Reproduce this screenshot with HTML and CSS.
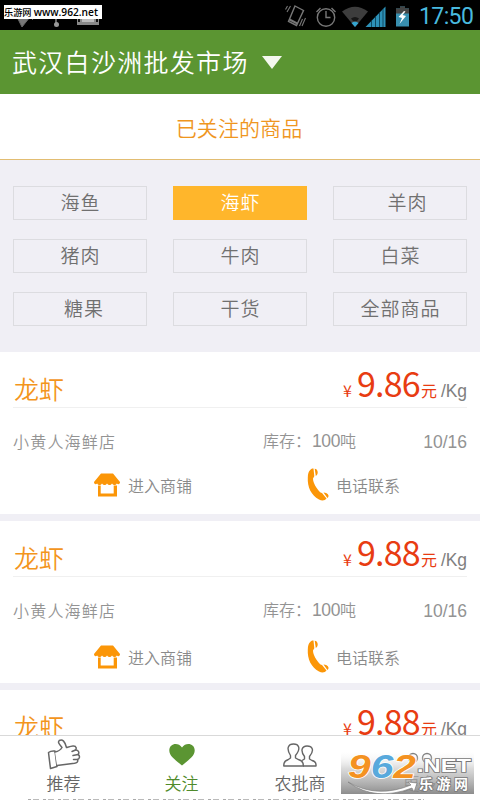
FILE: index.html
```html
<!DOCTYPE html>
<html lang="zh-CN">
<head>
<meta charset="utf-8">
<title>已关注的商品</title>
<link rel="stylesheet" href="styles.css">
</head>
<body>
<svg class="defs" width="0" height="0" aria-hidden="true">
  <symbol id="shop" viewBox="0 0 26 24">
    <path d="M7 .5h12L26 9C26 11 24.500 12 22.800 10.500 21.500 12.500 19.500 12.500 18 10.500 16.500 12.500 14.500 12.500 13 10.500 11.500 12.500 9.500 12.500 8 10.500 6.500 12.500 4.500 12.500 3.200 10.500 1.500 12 0 11 0 9z"/>
    <path d="M4 12.500h2.700v8h13v-8h3.300v11H4z"/>
  </symbol>
  <symbol id="phone" viewBox="0 0 22 33">
    <path d="M3.200 2C4.500.700 5.500.300 6.500.500L7.300 8.300 6 10.500C6 15 9.500 20.500 13.500 24.500L15 24.900 19.500 30.500C18 32.600 15 33 12 31.500C4 27 .300 19 .800 9.500C.900 6 1.500 3.500 3.200 2z"/>
    <path d="M7.700.7c1.800 0 3 1.600 3 3.600 0 1.600-.6 3-1.900 3.800zM16.500 24.600c1.700-.1 4.700 1.200 5 2.800.1 1-.3 1.900-1.100 2.500z"/>
  </symbol>
</svg>
<div class="screen">
  <div class="status">
    <svg class="notif" width="110" height="30" viewBox="0 0 110 30">
      <path d="M17 17l5 10 8-10zM30 17l3 3" fill="#777" stroke="#666"/>
      <path d="M56 17v7" stroke="#888" stroke-width="1.500"/><circle cx="56.500" cy="24.500" r="2.500" fill="#999"/>
      <path d="M77 17h22v8H77z" fill="#888"/><path d="M82 17h12v5H82z" fill="#bbb"/><path d="M79 19v3M97 19v3" stroke="#111" stroke-width="2"/>
    </svg>
    <div class="site">乐游网 <span>www.962.net</span></div>
    <svg class="sys" width="134" height="30" viewBox="0 0 134 30">
      <g fill="none" stroke="#777" stroke-width="1.400">
        <path d="M10 6l8.500 4.500-7 15L3.500 21.500z"/><path d="M4.500 19.500l8 4.200" stroke-width="2"/>
        <path d="M5.500 6L2 12M2.500 6L.5 9.500M20.500 18L17 26M17.500 19l-3 7" stroke-width="1.100"/>
        <circle cx="41" cy="17.500" r="8.700"/><path d="M41 11v6.500h4.500M31.500 12l4-4M50.500 12l-4-4"/>
      </g>
      <path d="M57 11.500Q70 2 83 11.500L70 27z" fill="#3d3d3d"/>
      <path d="M66 18.500Q70 15.500 74 18.500L72 21h-4z" fill="#171717"/><path d="M66.500 23Q70 20.500 73.500 23L70 27z" fill="#35a5d0"/>
      <path d="M80.500 27L100.500 6.500V27z" fill="#2d91b8"/><path d="M86.500 20.500V27M90.500 16.500V27M94.500 12.500V27M98 9V27" stroke="#08394b" stroke-width=".8"/>
      <path d="M115 6.500h5v2h4v18h-13V8.500h4z" fill="#388faf"/><path d="M115 6.500h5v2h4v5h-13v-5h4z" fill="#444"/>
      <path d="M119 11l-5.500 6 3.500 1-2.500 6 6.500-8-3.500-1 3-3.500z" fill="#fff"/>
    </svg>
    <div class="clock">17:50</div>
  </div>
  <header class="market"><span>武汉白沙洲批发市场</span><i></i></header>
  <h1 class="title">已关注的商品</h1>
  <nav class="chips">
    <a>海鱼</a><a class="on">海虾</a><a class="right">羊肉</a>
    <a>猪肉</a><a>牛肉</a><a>白菜</a>
    <a class="shift">糖果</a><a>干货</a><a>全部商品</a>
  </nav>
  <main class="list">
    <section class="card">
      <div class="head"><h2>龙虾</h2><p class="price"><small>¥</small><b>9.86</b><em>元</em><span>/Kg</span></p></div>
      <div class="info"><span class="store">小黄人海鲜店</span><span class="stock">库存：<i>100</i>吨</span><span class="date">10/16</span></div>
      <div class="acts"><a class="enter"><svg width="26" height="24"><use href="#shop"/></svg>进入商铺</a><a class="call"><svg width="22" height="33"><use href="#phone"/></svg>电话联系</a></div>
    </section>
    <section class="card second">
      <div class="head"><h2>龙虾</h2><p class="price"><small>¥</small><b>9.88</b><em>元</em><span>/Kg</span></p></div>
      <div class="info"><span class="store">小黄人海鲜店</span><span class="stock">库存：<i>100</i>吨</span><span class="date">10/16</span></div>
      <div class="acts"><a class="enter"><svg width="26" height="24"><use href="#shop"/></svg>进入商铺</a><a class="call"><svg width="22" height="33"><use href="#phone"/></svg>电话联系</a></div>
    </section>
    <section class="card third">
      <div class="head"><h2>龙虾</h2><p class="price"><small>¥</small><b>9.88</b><em>元</em><span>/Kg</span></p></div>
    </section>
  </main>
  <footer class="tabs">
    <a class="t1"><svg width="34" height="32" viewBox="0 0 34 32" fill="#fff" stroke="#666" stroke-width="1.500" stroke-linejoin="round" stroke-linecap="round">
      <path d="M1.500 13.500Q4 11.500 8 12L10 27.500 3.500 29.500Q2.500 22 1.500 13.500z"/>
      <path d="M8 13Q13 12 15 8.500C12 5 10.500 3 12.300 1.500C15.500-.2 18 2.500 19.500 8.500C23 7.500 28.500 5.500 29 8.500Q29.500 10.500 28.500 11C32 11 32.500 14 31 15.500C33.500 17 32.500 20 30.500 20.500C31.500 23 29.500 24 27.500 24.300L10 26.500"/>
      <path d="M25 12.500l3.500-1.500M26 16.500l5-1M26.500 20.500l4 0" fill="none"/></svg><span>推荐</span></a>
    <a class="t2"><svg width="26" height="22" viewBox="0 0 26 22"><path d="M13 21.500C6 15.500.3 12 .3 6.500.3-.5 9-2.200 13 3.500 17-2.200 25.700-.5 25.700 6.500 25.700 12 20 15.500 13 21.500z" fill="#5b9532"/></svg><span>关注</span></a>
    <a class="t3"><svg width="34" height="24" viewBox="0 0 34 24" fill="#fff" stroke="#666" stroke-width="1.400" stroke-linejoin="round">
      <path d="M20 23h13Q33.500 18.500 29 17.500L26.500 16V13.500C32 7 29 3 24 3S17 7.500 21.500 13.500V16L19 17.500"/>
      <path d="M.8 23h19.500Q20.500 18 16 16.800L12.500 15V12.500C18.500 5 15.500 1 10.500 1S2.800 5 7.500 12.500V15L5 16.800Q.5 18 .8 23z"/></svg><span>农批商</span></a>
    <a class="t4"><svg width="26" height="16" viewBox="0 0 26 16" fill="none" stroke="#666" stroke-width="1.400"><circle cx="6" cy="11" r="4.500"/><circle cx="20" cy="11" r="4.500"/></svg><span>更多</span></a>
    <div class="under"></div>
  </footer>
  <div class="mark">
    <svg width="133" height="43" viewBox="0 0 133 43">
      <defs><linearGradient id="haze" x2="0" y2="1"><stop offset="0" stop-color="#fff" stop-opacity=".1"/><stop offset=".4" stop-color="#ccc" stop-opacity=".7"/><stop offset="1" stop-color="#808080" stop-opacity=".9"/></linearGradient></defs>
      <path d="M0 0h133v43H0z" fill="url(#haze)"/>
      <g font-family="Liberation Sans" font-weight="700" font-style="italic" font-size="33" stroke="#fff" stroke-width="1.500" paint-order="stroke">
        <text x="7" y="27" textLength="68" lengthAdjust="spacingAndGlyphs"><tspan fill="#f49221">9</tspan><tspan fill="#58a9dc">6</tspan><tspan fill="#f49221">2</tspan></text>
      </g>
      <path d="M7 31Q36 48 70 34L67 31 76 32 73 41 71 37Q34 51 7 31z" fill="#fff" stroke="#777" stroke-width=".6"/>
      <g fill="#fff" stroke="#777" stroke-width="1.600" paint-order="stroke" font-weight="700">
        <text x="76" y="21" font-family="Liberation Sans" font-size="19" textLength="54" lengthAdjust="spacingAndGlyphs">.NET</text>
        <text x="78" y="38" font-family="Noto Sans CJK SC" font-size="14" textLength="49">乐游网</text>
      </g>
    </svg>
  </div>
</div>
</body>
</html>
```
FILE: styles.css
```css
* { box-sizing: border-box; }
body, h1, h2, p { margin: 0; font-weight: 350; }
body { font-family: "Noto Sans CJK SC", sans-serif; background: #f0eff5; }
i, em { font-style: normal; }
svg { flex: none; display: block; }
.defs { position: absolute; }
.screen { position: relative; width: 480px; height: 800px; overflow: hidden; display: flex; flex-direction: column; }

.status { position: relative; height: 30px; flex: none; background: #000; display: flex; justify-content: flex-end; }
.notif { position: absolute; left: 0; top: 0; }
.site { position: absolute; left: 4px; top: 5px; width: 98px; height: 14px; background: #fff; color: #000; font-size: 9.200px; font-weight: 500; line-height: 15px; white-space: nowrap; }
.site span { font-family: "Open Sans", sans-serif; font-weight: 600; font-size: 10.200px; }
.clock { width: 61px; font: 400 23px/34px Roboto, sans-serif; color: #49b9df; letter-spacing: -.6px; }

.market { height: 64px; flex: none; background: #5b9532; color: #fff; display: flex; align-items: center; padding: 0 0 0 12px; }
.market span { font-size: 25px; letter-spacing: 1.300px; line-height: 40px; padding-bottom: 2px; }
.market i { margin-left: 13px; border: 10.500px solid transparent; border-top: 13px solid #f4f8ee; border-bottom: 0; }

.title { height: 66px; flex: none; background: #fff; border-bottom: 1px solid #e2bd72; color: #ef961f; font-size: 21px; line-height: 67px; text-align: center; letter-spacing: .1px; padding-right: 2px; }

.chips { height: 192px; flex: none; padding: 26px 13px; display: grid; grid-template-columns: repeat(3, 134px); grid-auto-rows: 34px; align-content: start; gap: 19px 26px; }
.chips a { border: 1px solid #dcdce0; color: #707070; font-size: 19px; letter-spacing: 1px; line-height: 29px; padding-left: 1px; text-align: center; }
.chips .on { background: #ffb62b; border-color: #ffb62b; color: #fff; }
.chips .right { padding-left: 15px; }
.chips .shift { padding-left: 8px; }

.list { flex: none; display: flex; flex-direction: column; gap: 7px; }
.card { background: #fff; height: 162px; padding: 0 13px; }
.head { height: 56px; border-bottom: 1px solid #f0f0f0; display: flex; justify-content: space-between; align-items: flex-end; }
h2 { color: #f3951d; font-size: 25px; line-height: 36px; padding: 0 0 1px 1px; }
.price { display: flex; align-items: baseline; line-height: 46px; color: #e83c12; white-space: nowrap; margin-bottom: -7px; }
.price small { width: 14px; font-size: 16px; font-weight: 400; }
.price b { width: 64px; font-size: 34px; font-weight: 400; letter-spacing: -.8px; }
.price em { width: 20px; font-size: 16px; font-weight: 400; }
.price span { font-family: "Liberation Sans", sans-serif; font-size: 17.500px; color: #808080; width: 26px; letter-spacing: -.2px; }
.info { height: 60px; padding-top: 5px; display: grid; grid-template-columns: 249px 1fr auto; align-items: center; color: #939393; font-size: 16px; line-height: 24px; }
.store { letter-spacing: 1.200px; }
.stock { padding-left: 1px; }
.stock i, .date { font-family: "Liberation Sans", sans-serif; font-size: 17.500px; }
.date { padding-top: 2px; }
.stock i { letter-spacing: -.4px; margin-left: 1px; }
.acts { height: 34px; display: flex; color: #8a8a8a; font-size: 16px; }
.acts a { display: flex; align-items: center; line-height: 24px; padding-bottom: 1px; }
.acts svg { fill: #fb9608; }
.enter { margin-left: 81px; width: 213px; gap: 8px; }
.call { gap: 7px; }
.second .acts { margin-top: 3px; }

.tabs { position: absolute; left: 0; right: 0; top: 735px; height: 65px; background: #fff; border-top: 1px solid #d9d9d9; color: #666; font-size: 17px; display: flex; }
.tabs a { width: 119px; display: grid; grid-template-rows: 34px 24px; justify-items: center; align-items: center; line-height: 24px; padding-top: 2px; align-content: start; }
.tabs .t1 { width: 127px; }
.tabs .t2 { width: 109px; color: #4f8a2b; }
.tabs .t3 { width: 128px; }
.tabs .t4 { width: 111px; }
.tabs span { margin-top: -2px; }
.under { position: absolute; left: 28px; right: 56px; bottom: 0; height: 1px; background: repeating-linear-gradient(90deg, #aaa 0 3px, #fff 3px 5px, #bbb 5px 11px, #fff 11px 15px); }
.mark { position: absolute; left: 341px; top: 751px; }
```
